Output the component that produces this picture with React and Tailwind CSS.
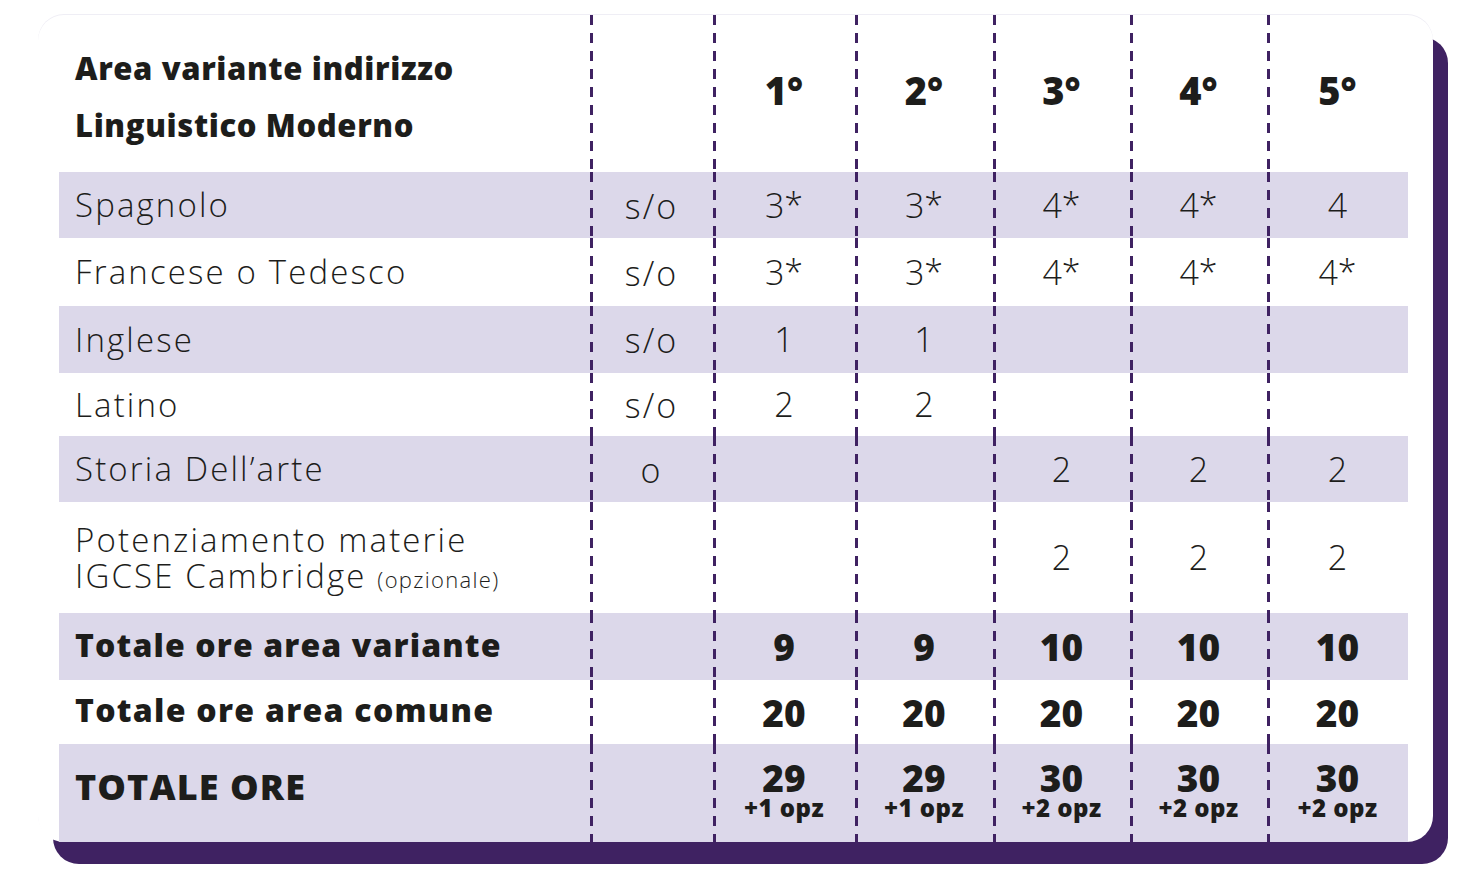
const rows = [
  { label: "Spagnolo", type: "s/o", values: ["3*", "3*", "4*", "4*", "4"], shade: true, h: "h-[66px]" },
  { label: "Francese o Tedesco", type: "s/o", values: ["3*", "3*", "4*", "4*", "4*"], shade: false, h: "h-[68px]" },
  { label: "Inglese", type: "s/o", values: ["1", "1", "", "", ""], shade: true, h: "h-[67px]" },
  { label: "Latino", type: "s/o", values: ["2", "2", "", "", ""], shade: false, h: "h-[63px]" },
  { label: "Storia Dell’arte", type: "o", values: ["", "", "2", "2", "2"], shade: true, h: "h-[66px]" },
];

const years = ["1°", "2°", "3°", "4°", "5°"];
const cols = "grid grid-cols-[531px_123px_142px_138px_137px_137px_141px]";
// dashed divider drawn on the left edge of each cell
const dash =
  "flex items-center justify-center bg-[linear-gradient(to_bottom,#3f2262_10px,transparent_10px)] bg-[length:3px_18px] bg-repeat-y";

function Row({ shade, h, children }) {
  return (
    <div className={`${cols} ${h} ${shade ? "bg-[#dcd8ea]" : ""}`}>
      {children}
    </div>
  );
}

export default function App() {
  return (
    <div className="min-h-[880px] bg-white pt-[15px] pl-[38px] text-[#1d1d1b]" style={{ fontFamily: "'Open Sans', Lato, sans-serif" }}>
      <div className="w-[1395px] rounded-[26px] bg-white pl-[21px] pr-[25px] shadow-[15px_22px_0_0_#3f2262,0_-1px_0_0_#efeef5]">
        {/* header */}
        <Row shade={false} h="h-[157px]">
          <div className="flex flex-col justify-center pl-4 pt-[6px] text-[31px] font-extrabold leading-[57px] tracking-[0.02em]">
            <span>Area variante indirizzo</span>
            <span>Linguistico Moderno</span>
          </div>
          <div className={dash}></div>
          {years.map((y) => (
            <div key={y} className={`${dash} pb-[6px] text-[38px] font-extrabold`}>
              {y}
            </div>
          ))}
        </Row>

        {rows.map((r) => (
          <Row key={r.label} shade={r.shade} h={r.h}>
            <div className="flex items-center pl-4 text-[33px] font-light tracking-[0.065em]">{r.label}</div>
            <div className={`${dash} pt-[2px] text-[34px] font-light tracking-[0.06em]`}>{r.type}</div>
            {r.values.map((v, i) => (
              <div key={i} className={`${dash} text-[34px] font-light`}>
                {v}
              </div>
            ))}
          </Row>
        ))}

        <Row shade={false} h="h-[111px]">
          <div className="flex flex-col justify-center pl-4 pt-[4px] text-[33px] font-light leading-[36px] tracking-[0.065em]">
            <span>Potenziamento materie</span>
            <span>
              IGCSE Cambridge <span className="text-[22px] tracking-[0.06em]">(opzionale)</span>
            </span>
          </div>
          <div className={dash}></div>
          <div className={dash}></div>
          <div className={dash}></div>
          {["2", "2", "2"].map((v, i) => (
            <div key={i} className={`${dash} text-[34px] font-light`}>
              {v}
            </div>
          ))}
        </Row>

        <Row shade={true} h="h-[67px]">
          <div className="flex items-center pl-4 pb-[4px] text-[32px] font-extrabold tracking-[0.035em]">Totale ore area variante</div>
          <div className={dash}></div>
          {["9", "9", "10", "10", "10"].map((v, i) => (
            <div key={i} className={`${dash} text-[37px] font-extrabold`}>
              {v}
            </div>
          ))}
        </Row>

        <Row shade={false} h="h-[64px]">
          <div className="flex items-center pl-4 pb-[4px] text-[32px] font-extrabold tracking-[0.04em]">Totale ore area comune</div>
          <div className={dash}></div>
          {["20", "20", "20", "20", "20"].map((v, i) => (
            <div key={i} className={`${dash} pt-[2px] text-[37px] font-extrabold`}>
              {v}
            </div>
          ))}
        </Row>

        <Row shade={true} h="h-[98px]">
          <div className="flex items-center pl-4 pb-[12px] text-[36px] font-extrabold tracking-[0.03em]">TOTALE ORE</div>
          <div className={dash}></div>
          {[
            ["29", "+1 opz"],
            ["29", "+1 opz"],
            ["30", "+2 opz"],
            ["30", "+2 opz"],
            ["30", "+2 opz"],
          ].map(([n, o], i) => (
            <div key={i} className={`${dash} flex-col pb-[8px]`}>
              <span className="text-[37px] font-extrabold leading-[37px]">{n}</span>
              <span className="text-[24px] font-extrabold leading-[24px] tracking-[0.02em]">{o}</span>
            </div>
          ))}
        </Row>
      </div>
    </div>
  );
}
